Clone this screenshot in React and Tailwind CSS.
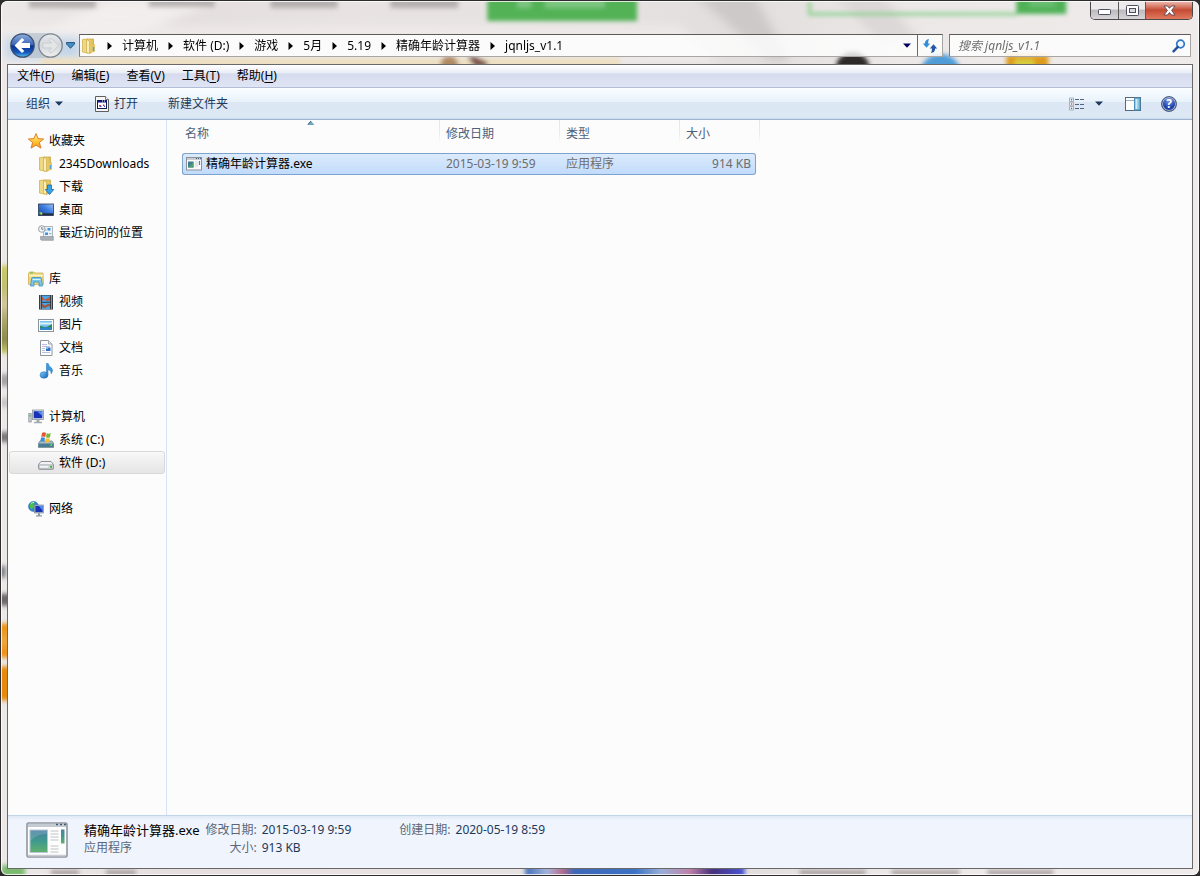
import React from "react";

/* ---------- icons ---------- */

function Svg({ w = 16, h = 16, children, className = "" }) {
  return (
    <svg width={w} height={h} viewBox={`0 0 ${w} ${h}`} className={`shrink-0 ${className}`} aria-hidden="true">
      {children}
    </svg>
  );
}

function FolderIcon() {
  return (
    <Svg>
      <defs>
        <linearGradient id="fold" x1="0" x2="1">
          <stop offset="0" stopColor="#f3dc84" />
          <stop offset="1" stopColor="#dcb94e" />
        </linearGradient>
      </defs>
      <path d="M1.500 1.500l5-.5v14l-5-1z" fill="#f0d784" stroke="#d2b252" strokeWidth=".8" />
      <path d="M6 1h6.500v10.500L10 15H6z" fill="url(#fold)" stroke="#c9a848" strokeWidth=".8" />
      <path d="M5.500 1.500L8.500 3v12.500l-3-1z" fill="#fbefb6" stroke="#c9a444" strokeWidth=".6" />
      <path d="M10 8l4-2v7.500L10 15z" fill="#e6c765" />
      <path d="M12.500 9v4" stroke="#4fa3dc" strokeWidth="1.500" />
    </Svg>
  );
}

function DownloadIcon() {
  return (
    <Svg>
      <path d="M1.500 1.500l5-.5v14l-5-1z" fill="#f0d784" stroke="#d2b252" strokeWidth=".8" />
      <path d="M6 1h6.500v10.500L10 15H6z" fill="#e5c762" stroke="#c9a848" strokeWidth=".8" />
      <path d="M5.500 1.500L8.500 3v12.500l-3-1z" fill="#fbefb6" stroke="#c9a444" strokeWidth=".6" />
      <path d="M9.500 6h4v4.500h2.300L11.500 15.600 7.300 10.500h2.200z" fill="#36a2e8" stroke="#1a66ad" strokeWidth=".8" />
    </Svg>
  );
}

function StarIcon() {
  return (
    <Svg>
      <defs>
        <linearGradient id="star" x1="0" y1="0" x2="0" y2="1">
          <stop offset="0" stopColor="#fff0a0" />
          <stop offset=".5" stopColor="#ffc93a" />
          <stop offset="1" stopColor="#f79a1c" />
        </linearGradient>
      </defs>
      <path d="M8 .6l2.200 5 5.400.4-4.200 3.500 1.500 5.600L8 12.100l-4.900 3 1.500-5.600L.4 6l5.400-.4z" fill="url(#star)" stroke="#d9701c" strokeWidth=".9" strokeLinejoin="round" />
    </Svg>
  );
}

function DesktopIcon() {
  return (
    <Svg>
      <defs>
        <linearGradient id="desk" x1="0" y1="1" x2="1" y2="0">
          <stop offset="0" stopColor="#173f9a" />
          <stop offset=".55" stopColor="#3d7ee0" />
          <stop offset="1" stopColor="#9cc4f4" />
        </linearGradient>
      </defs>
      <rect x=".5" y="2" width="15" height="11.500" fill="url(#desk)" stroke="#2a3a5a" strokeWidth=".8" />
      <rect x="1" y="11.300" width="14" height="2" fill="#24303f" />
      <rect x="1.500" y="10" width="2.500" height="2.500" fill="#5fc66a" />
      <rect x="2.800" y="11" width="1.500" height="1.500" fill="#f0c040" />
    </Svg>
  );
}

function RecentIcon() {
  return (
    <Svg>
      <path d="M5.500 1.500h9v11h-9z" fill="#eef3f8" stroke="#98a3ae" strokeWidth=".8" />
      <path d="M2.500 11.500h12.800v3.800H4q-1.500 0-1.500-1.500z" fill="#a9b0b8" stroke="#838b94" strokeWidth=".6" />
      <rect x="9.500" y="3" width="3" height="2.500" fill="#3d93dd" />
      <rect x="7" y="7.500" width="3" height="2.500" fill="#3d93dd" />
      <path d="M11 8.700h2.500M7 5h1.500" stroke="#7fb0d8" />
      <circle cx="3.800" cy="4" r="3.300" fill="#f2f4f6" stroke="#8f989f" strokeWidth=".9" />
      <path d="M3.800 2v2.200h1.700" fill="none" stroke="#56616b" strokeWidth=".8" />
    </Svg>
  );
}

function LibraryIcon() {
  return (
    <Svg>
      <path d="M.5 2.500l1-1.500h4.500L7 2h8l.5 11.500H.5z" fill="#f0d784" stroke="#cfae54" strokeWidth=".8" />
      <path d="M1 4.500h14" stroke="#fff5c4" strokeWidth="1.400" />
      <path d="M2 2h3" stroke="#62b848" strokeWidth="1" />
      <path d="M3.500 8Q3.500 6.500 5 6.500h7q1.500 0 1.500 1.500l1 7H11v-4H6v4H2.500z" fill="#79c6ea" stroke="#3b93c0" strokeWidth=".8" />
      <path d="M4.500 8.500h8" stroke="#d8f2fc" />
    </Svg>
  );
}

function VideoIcon() {
  return (
    <Svg>
      <rect x="1" y="1" width="14" height="14.500" fill="#2b3038" />
      <rect x="4" y="1.500" width="8" height="6.300" fill="#4aa4e6" />
      <rect x="4" y="8.700" width="8" height="6.300" fill="#4aa4e6" />
      <path d="M4 2.500q2 3.500 4 2.500t4-2.500V6q-2 2-4 .5T4 7z" fill="#b85a3c" />
      <path d="M4 9.500q3 3 4 1.500t4-1v2.500q-2-1-4 1T4 12.500z" fill="#a0543c" />
      <path d="M2.500 1.500v14M13.500 1.500v14" stroke="#eef2f5" strokeWidth="1.300" strokeDasharray="1 1" />
    </Svg>
  );
}

function PictureIcon() {
  return (
    <Svg>
      <rect x=".5" y="2.500" width="15" height="12" fill="#fff" stroke="#8b949c" />
      <rect x="2" y="4" width="12" height="9" fill="#7cc3ec" />
      <path d="M2 6.500h12" stroke="#d9effa" strokeWidth="2" />
      <path d="M2 9q3 .5 5 1t7-3v4H2z" fill="#2f8a4c" />
      <path d="M2 11q6-1.500 12-.5V13H2z" fill="#2b86c8" />
    </Svg>
  );
}

function DocumentIcon() {
  return (
    <Svg>
      <path d="M2.500.5h8l3.500 3.500v11.500H2.500z" fill="#fdfdfd" stroke="#8e959c" />
      <path d="M10.500.5V4H14" fill="#dfe4e9" stroke="#8e959c" strokeWidth=".8" />
      <path d="M4 4.500h5M4 6.500h8M4 8.500h3M4 10.500h3M4 12.500h8" stroke="#b3b9de" strokeWidth=".9" />
      <rect x="8" y="7.500" width="4.500" height="3.500" fill="#2f6fc4" />
      <rect x="8" y="7.500" width="2" height="1.500" fill="#7fc4f0" />
    </Svg>
  );
}

function MusicIcon() {
  return (
    <Svg>
      <defs>
        <linearGradient id="mus" x1="0" y1="0" x2="1" y2="1">
          <stop offset="0" stopColor="#7fcdfa" />
          <stop offset="1" stopColor="#0f62b4" />
        </linearGradient>
      </defs>
      <ellipse cx="6" cy="12" rx="4" ry="3.300" fill="url(#mus)" stroke="#1b6bb4" strokeWidth=".5" />
      <path d="M8.500.5h1.700Q10.500 3 13 4.500 16 7 13.300 10.800 13.600 7.500 10 6.500V12H8.500z" fill="#3b9ae0" stroke="#1b6bb4" strokeWidth=".5" />
    </Svg>
  );
}

function ComputerIcon() {
  return (
    <Svg>
      <rect x=".8" y="4.500" width="2.400" height="8.500" fill="#c9ced3" stroke="#838b92" strokeWidth=".7" />
      <rect x="1.300" y="6" width="1.300" height="1.500" fill="#4cb84c" />
      <rect x="4.500" y="1" width="11" height="9.500" fill="#d8dde2" stroke="#8c949c" strokeWidth=".8" />
      <rect x="5.700" y="2.200" width="8.600" height="7" fill="#1532b8" />
      <path d="M9 2.200h5.300V7z" fill="#5a8cf0" />
      <path d="M8.500 10.800h3v2h2.500v1.500H6v-1.500h2.500z" fill="#a2a9b0" />
    </Svg>
  );
}

function SystemDriveIcon() {
  return (
    <Svg>
      <path d="M2 9h12l1.800 2.500v4H.3v-4z" fill="#a9bcc5" stroke="#667a84" strokeWidth=".7" />
      <rect x=".6" y="11.500" width="15" height="3.500" fill="#4a7f93" />
      <rect x="12.500" y="12" width="1.500" height="2" fill="#59e05a" />
      <path d="M4 1q2-1.300 4 0L7.300 5q-2-1-4 0z" fill="#e8542c" />
      <path d="M8.700 1.300q2 1 4-.2L12 5.200q-2 1.200-4 0z" fill="#76b83a" />
      <path d="M3 5.700q2-1 4 0L6.300 9.500q-2-1-4 0z" fill="#3a8be0" />
      <path d="M7.800 6q2 1.200 4 0L11 9.900q-2 1.200-4 0z" fill="#f6c12c" />
    </Svg>
  );
}

function DriveIcon() {
  return (
    <Svg>
      <path d="M3 6.500h10l2.500 3v4q0 .8-1 .8H1.500q-1 0-1-.8v-4z" fill="#f1f2f3" stroke="#80878d" strokeWidth=".9" />
      <path d="M.8 9.800h14.400v4H.8z" fill="#d4d8dc" stroke="#8e959b" strokeWidth=".6" />
      <path d="M2 11.800h8" stroke="#f7f8f9" strokeWidth="1.500" />
      <rect x="12" y="10.800" width="2" height="2" fill="#4cb93c" />
    </Svg>
  );
}

function NetworkIcon() {
  return (
    <Svg>
      <circle cx="5.500" cy="5.500" r="5" fill="#2c86d8" stroke="#1b5fa4" strokeWidth=".5" />
      <path d="M2 3q2-2.500 5-1.500L5.500 4 6 6 3.500 8.500Q1 6 2 3z" fill="#4cc04a" />
      <path d="M3 2.500q1.500-1.500 3-1" stroke="#cdf3d0" fill="none" />
      <rect x="6.500" y="4" width="9" height="8" fill="#d5dae0" stroke="#7f8890" strokeWidth=".7" />
      <rect x="7.300" y="4.800" width="7.400" height="6.400" fill="#1535b4" />
      <path d="M10.500 4.800h4.200V9.500z" fill="#5a8cf0" />
      <path d="M10 12.200h2v2h2v1.300H8v-1.300h2z" fill="#8f979f" />
    </Svg>
  );
}

function AppIcon() {
  return (
    <Svg h={14}>
      <rect x=".5" y=".5" width="15" height="12.500" fill="#fafafa" stroke="#8d9298" />
      <path d="M1 2h14" stroke="#c9ced4" strokeWidth="2" />
      <path d="M10 1.500h1M12 1.500h1M14 1.500h1" stroke="#4c5d70" />
      <rect x="2" y="4.500" width="5.500" height="6" fill="#3f7f90" />
      <path d="M2 10.500L7.500 5v5.500z" fill="#4fa070" />
      <path d="M9 5h3M9 7h3M9 9h3" stroke="#cfd3d6" />
      <path d="M13.500 4v4" stroke="#4b7fae" strokeWidth="1.200" />
    </Svg>
  );
}

function LargeAppIcon() {
  return (
    <Svg w={42} h={36}>
      <defs>
        <linearGradient id="appbig" x1="0" y1="0" x2="0" y2="1">
          <stop offset="0" stopColor="#4a7fa6" />
          <stop offset=".5" stopColor="#3f9a8c" />
          <stop offset="1" stopColor="#63b06c" />
        </linearGradient>
      </defs>
      <rect x="1" y="1" width="40" height="34" rx="1.500" fill="#fdfdfd" stroke="#8f979f" strokeWidth="1.600" />
      <rect x="2" y="2" width="38" height="3" fill="#c3cad2" />
      <path d="M30 2.500h2M34 2.500h2M38 2.500h2" stroke="#44586e" strokeWidth="1.300" />
      <rect x="4" y="8" width="17.500" height="22.500" fill="url(#appbig)" stroke="#b7c6d4" />
      <path d="M4.500 19Q12 11 21 12V8.500H4.500z" fill="#fff" opacity=".14" />
      <path d="M24.500 9h8M24.500 12h8M24.500 15h8M24.500 18h8M24.500 24h8M24.500 27h8M24.500 30h8" stroke="#d3d6d9" strokeWidth="1.300" />
      <rect x="35" y="7.500" width="3.500" height="14" fill="url(#appbig)" />
      <path d="M2 33.500h38" stroke="#c8ccd0" strokeWidth="1.500" />
    </Svg>
  );
}

function OpenIcon() {
  return (
    <Svg w={14} h={16}>
      <path d="M.5.500h10L13.500 3.500v12H.5z" fill="#f6f6f6" stroke="#5f5f5f" />
      <path d="M10.500.5v3h3" fill="#fff" stroke="#5f5f5f" strokeWidth=".8" />
      <rect x="2.500" y="4.500" width="9" height="8" fill="#fff" stroke="#111b4d" />
      <path d="M2 5.500h10" stroke="#0d1a78" strokeWidth="2" />
      <path d="M7 5h1M9 5h1" stroke="#fff" />
      <path d="M4 9h2v1.500H4z" fill="#e03030" />
      <path d="M5 10h1.500v1H5z" fill="#3050d8" />
      <path d="M8 8.500h1.300V10H8z" fill="#d02020" />
      <path d="M9 9.800h1V11H9z" fill="#2a48c8" />
    </Svg>
  );
}

function Caret({ color = "#1e395b" }) {
  return (
    <Svg w={8} h={5}>
      <path d="M0 .5h8L4 4.800z" fill={color} />
    </Svg>
  );
}

function Crumb() {
  return (
    <Svg w={5} h={8}>
      <path d="M.5 0v8L5 4z" fill="#000" />
    </Svg>
  );
}

/* ---------- what shows through the glass frame ---------- */

function GlassBackdrop() {
  return (
    <svg className="absolute inset-0 h-full w-full" viewBox="0 0 1200 876" preserveAspectRatio="none" aria-hidden="true">
      <defs>
        <filter id="soft" filterUnits="userSpaceOnUse" x="-20" y="-20" width="1240" height="916">
          <feGaussianBlur stdDeviation="2" />
        </filter>
        <filter id="softer" filterUnits="userSpaceOnUse" x="-20" y="-20" width="1240" height="916">
          <feGaussianBlur stdDeviation="5" />
        </filter>
        <linearGradient id="glass" x1="0" x2="1">
          <stop offset="0" stopColor="#ece8e7" />
          <stop offset=".15" stopColor="#e4dfde" />
          <stop offset=".3" stopColor="#e8e3e2" />
          <stop offset=".5" stopColor="#e6e2e1" />
          <stop offset=".62" stopColor="#e2dedd" />
          <stop offset=".75" stopColor="#ece8e7" />
          <stop offset="1" stopColor="#efebea" />
        </linearGradient>
        <linearGradient id="olive" x1="0" y1="0" x2="0" y2="1">
          <stop offset="0" stopColor="#cdcb68" />
          <stop offset=".25" stopColor="#c3c070" />
          <stop offset=".45" stopColor="#d3c6a0" />
          <stop offset=".65" stopColor="#a8a468" />
          <stop offset=".85" stopColor="#8c8d4c" />
          <stop offset="1" stopColor="#c8cb70" />
        </linearGradient>
        <linearGradient id="orange" x1="0" y1="0" x2="0" y2="1">
          <stop offset="0" stopColor="#ee8a0c" />
          <stop offset=".5" stopColor="#f0a840" />
          <stop offset="1" stopColor="#ee8a0c" />
        </linearGradient>
        <linearGradient id="strip" x1="0" x2="1">
          <stop offset="0" stopColor="#3f6cba" />
          <stop offset=".1" stopColor="#a5b6dc" />
          <stop offset=".17" stopColor="#b86a8c" />
          <stop offset=".22" stopColor="#3f68b8" />
          <stop offset=".5" stopColor="#3a72c6" />
          <stop offset=".62" stopColor="#9ab0d8" />
          <stop offset=".75" stopColor="#c080a8" />
          <stop offset=".85" stopColor="#45307c" />
          <stop offset="1" stopColor="#4a58d8" />
        </linearGradient>
      </defs>
      <rect width="1200" height="876" fill="url(#glass)" />
      <g filter="url(#softer)">
        <path d="M110 0H220L100 46H0z" fill="#f6f3f2" opacity=".7" />
        <path d="M690 -10H752L790 60H770z" fill="#c6c2c1" opacity=".75" />
        <path d="M830 -10H880L920 40H880z" fill="#d4cfce" opacity=".6" />
        <path d="M0 24H680L720 64H0z" fill="#f3efee" opacity=".6" />
        <path d="M4 36H80V58H4z" fill="#a4c6e6" opacity=".6" />
      </g>
      <g filter="url(#soft)">
        <path d="M28 -4H95V7H28zM148 -4H214V6H148zM270 -4H337V7H270zM390 -4H458V7H390z" fill="#7d7577" opacity=".45" />
        <rect x="487" y="-10" width="150" height="30" fill="#52b257" />
        <path d="M517 -4h14v11h-14zM545 -4h60v11h-60z" fill="#8fcf92" opacity=".7" />
        <path d="M810 0V13H1018" fill="none" stroke="#8fd092" strokeWidth="4" opacity=".8" />
        <rect x="1017" y="-10" width="50" height="23" fill="#4fb157" />
        <rect x="1030" y="-4" width="26" height="10" fill="#7cc682" opacity=".6" />
        <rect x="40" y="57" width="580" height="10" fill="#ecdfc2" />
        <circle cx="449" cy="64" r="9" fill="#b08a64" />
        <path d="M467 56h8l12 5v5h-12z" fill="#7a5148" />
        <circle cx="853" cy="68" r="17" fill="#2e2a2a" />
        <circle cx="941" cy="74" r="21" fill="#4f9cd8" />
        <path d="M1007 54h42v14h-42z" fill="#dd9a1c" />
        <path d="M1015 58h20v10h-20z" fill="#d8cc40" />
        <rect x="-4" y="265" width="20" height="88" fill="url(#olive)" />
        <rect x="-4" y="374" width="20" height="12" fill="#a9a3a5" />
        <rect x="-4" y="398" width="20" height="9" fill="#cbc5c6" />
        <rect x="-4" y="432" width="20" height="10" fill="#7d7779" />
        <rect x="-4" y="566" width="9" height="12" fill="#85848c" />
        <rect x="-4" y="594" width="20" height="12" fill="#6e6869" />
        <rect x="-4" y="624" width="20" height="34" fill="url(#orange)" />
        <rect x="-4" y="667" width="20" height="34" fill="#e68a10" />
        <path d="M0 866h24v12H0z" fill="#7cba70" />
        <path d="M50 871h28v5H50zM105 871h30v5h-30zM800 871h66v5h-66zM892 871h68v5h-68zM988 871h66v5h-66z" fill="#847c7d" opacity=".7" />
        <rect x="525" y="866" width="220" height="14" fill="url(#strip)" />
      </g>
    </svg>
  );
}

/* ---------- window chrome ---------- */

function WindowControls() {
  return (
    <div className="flex h-[19px] overflow-hidden rounded-b-[5px] border border-t-0 border-[#4b484a]">
      <button aria-label="最小化" className="flex w-7 items-end justify-center border-r border-[#5b585a] bg-linear-to-b from-[#eceaeb] from-45% via-[#bcbabd] via-50% to-[#d8d6d9] pb-[4px]">
        <Svg w={13} h={6}>
          <rect x=".5" y=".5" width="12" height="5" rx=".8" fill="#fff" stroke="#4e5060" />
        </Svg>
      </button>
      <button aria-label="最大化" className="flex w-[27px] items-center justify-center border-r border-[#5b585a] bg-linear-to-b from-[#eceaeb] from-45% via-[#bcbabd] via-50% to-[#d8d6d9]">
        <Svg w={13} h={11}>
          <rect x=".5" y=".5" width="12" height="10" rx=".8" fill="#fff" stroke="#4e5060" />
          <rect x="3.500" y="3.500" width="6" height="4" fill="#d9d8dc" stroke="#4e5060" />
        </Svg>
      </button>
      <button aria-label="关闭" className="flex w-[46px] items-center justify-center bg-linear-to-b from-[#eab5aa] from-5% via-[#c44a32] via-50% to-[#e07a60]">
        <Svg w={13} h={11}>
          <path d="M1 1h3.500L6.500 3.300 8.500 1H12L8.600 5.400 12 10H8.500L6.500 7.500 4.500 10H1L4.400 5.400z" fill="#fff" stroke="#5b4650" strokeWidth=".9" />
        </Svg>
      </button>
    </div>
  );
}

function NavButtons() {
  return (
    <div className="flex items-center">
      <div className="flex items-center gap-[3px] rounded-full bg-[#b2bcc6]/60">
        <button aria-label="后退" className="rounded-full">
          <Svg w={25} h={25}>
            <defs>
              <linearGradient id="bk" x1="0" y1="0" x2="0" y2="1">
                <stop offset="0" stopColor="#8fb0dd" />
                <stop offset=".45" stopColor="#3d69b8" />
                <stop offset=".52" stopColor="#0b3290" />
                <stop offset=".8" stopColor="#1557bc" />
                <stop offset="1" stopColor="#59c8f6" />
              </linearGradient>
            </defs>
            <circle cx="12.500" cy="12.500" r="11.700" fill="url(#bk)" stroke="#3d4d6b" strokeWidth="1.200" />
            <path d="M12 5l2.300 2-3 3.100H20v4.800h-8.700l3 3.100L12 20l-7.500-7.500z" fill="#fff" />
          </Svg>
        </button>
        <button aria-label="前进" className="rounded-full">
          <Svg w={25} h={25}>
            <defs>
              <linearGradient id="fw" x1="0" y1="0" x2="0" y2="1">
                <stop offset="0" stopColor="#e6eaed" />
                <stop offset=".5" stopColor="#d3d7db" />
                <stop offset="1" stopColor="#efefef" />
              </linearGradient>
            </defs>
            <circle cx="12.500" cy="12.500" r="11.700" fill="url(#fw)" stroke="#7f868e" strokeWidth="1.300" />
            <path d="M13 5l-2.300 2 3 3.100H5v4.800h8.700l-3 3.100L13 20l7.500-7.500z" fill="#e3e5e7" stroke="#c3c7cb" strokeWidth=".7" />
          </Svg>
        </button>
      </div>
      <button aria-label="最近的页面" className="ml-[3px]">
        <Svg w={9} h={7}>
          <path d="M.5.500h8v1.500L4.500 6.300.5 2z" fill="#3f8fc4" stroke="#1d3f6e" strokeWidth=".8" />
        </Svg>
      </button>
    </div>
  );
}

const crumbs = ["计算机", "软件 (D:)", "游戏", "5月", "5.19", "精确年龄计算器", "jqnljs_v1.1"];

function AddressBar() {
  return (
    <div className="flex h-[23px] flex-1 border border-[#a9a5a3] border-t-[#5d5b59] border-l-[#7d7a78] bg-white/80">
      <nav aria-label="地址" className="flex min-w-0 flex-1 items-center gap-2.5 pl-px">
        <FolderIcon />
        {crumbs.map((c) => (
          <React.Fragment key={c}>
            <Crumb />
            <button className="whitespace-nowrap text-black">{c}</button>
          </React.Fragment>
        ))}
      </nav>
      <button aria-label="以前的位置" className="flex w-5 items-center justify-center">
        <Caret color="#00005a" />
      </button>
      <button aria-label="刷新" className="flex w-[25px] items-center justify-center border-l border-[#6d6a68]">
        <Svg>
          <path d="M7 1Q3 1.500 2.800 5.500H.8l3.700 4.200 3.700-4.200H6q0-2 1-4.500z" fill="#2f8fd8" />
          <path d="M9 15q4-.5 4.200-4.500h2L11.500 6.300 7.800 10.500H10q0 2-1 4.500z" fill="#2458a6" />
        </Svg>
      </button>
    </div>
  );
}

function SearchBox() {
  return (
    <form role="search" onSubmit={(e) => e.preventDefault()} className="flex h-[23px] w-[242px] items-center border border-[#a9a5a3] border-t-[#5d5b59] border-l-[#7d7a78] bg-white/80 pr-1 pl-2">
      <input aria-label="搜索" placeholder="搜索 jqnljs_v1.1" className="min-w-0 flex-1 bg-transparent italic outline-none placeholder:text-[#6f6f6f]" />
      <button aria-label="开始搜索">
        <Svg w={14} h={14}>
          <circle cx="8.500" cy="5" r="3.800" fill="#eef8ff" stroke="#2f78c8" strokeWidth="1.700" />
          <path d="M5.800 7.800L1.500 12.300" stroke="#23509c" strokeWidth="2.400" strokeLinecap="round" />
        </Svg>
      </button>
    </form>
  );
}

/* ---------- bars ---------- */

const menus = [
  ["文件", "F"],
  ["编辑", "E"],
  ["查看", "V"],
  ["工具", "T"],
  ["帮助", "H"],
];

function MenuBar() {
  return (
    <div role="menubar" className="flex h-[23px] shrink-0 items-center gap-[17px] border-b border-[#b3bdd5] bg-[linear-gradient(#ffffff,#e8ecf6_38%,#d5dbee_39%,#e0e5f5)] pl-[9px] text-black">
      {menus.map(([label, key]) => (
        <button role="menuitem" key={key} className="whitespace-nowrap">
          {label}(<u className="underline-offset-2">{key}</u>)
        </button>
      ))}
    </div>
  );
}

function Toolbar() {
  return (
    <div className="flex h-8 shrink-0 items-center border-b border-[#a0b4cf] bg-[linear-gradient(#fbfeff,#e8f2fb_45%,#dce6f4_46%,#dde8f5_94%,#c8daec)] pr-[15px] pl-[18px] text-[#1e395b]">
      <button className="flex items-center gap-[5px]">
        组织 <Caret />
      </button>
      <button className="ml-8 flex items-center gap-[5px]">
        <OpenIcon />
        打开
      </button>
      <button className="ml-[30px]">新建文件夹</button>
      <div className="ml-auto flex items-center">
        <button aria-label="更改您的视图">
          <Svg w={16} h={14}>
            <path d="M.5 1h4v3.500h-4zM.5 5.200h4v3.500h-4zM.5 9.500h4V13h-4z" fill="#fff" stroke="#8ea0b4" strokeWidth=".8" />
            <path d="M1.800 2.800h1.500" stroke="#2f6fb4" strokeWidth="1.300" />
            <path d="M1.800 7h1.500" stroke="#d83a2a" strokeWidth="1.300" />
            <path d="M1.800 11.300h1.500" stroke="#3a7a58" strokeWidth="1.300" />
            <path d="M6 2.500h4M11 2.500h4M6 7.500h4M11 7.500h4M6 11.500h4M11 11.500h4" stroke="#50667e" />
          </Svg>
        </button>
        <button aria-label="更多选项" className="ml-2.5">
          <Caret />
        </button>
        <button aria-label="显示预览窗格" className="ml-[22px]">
          <Svg w={16} h={14}>
            <rect x=".5" y=".5" width="15" height="13" fill="#fdfefe" stroke="#54697f" />
            <path d="M1 3.500h8.500" stroke="#9fb0c0" />
            <rect x="9.500" y="1" width="5.500" height="12" fill="#86cbe6" stroke="#4b8db2" />
            <path d="M11.500 2v10" stroke="#cdeefa" strokeWidth="1.500" />
          </Svg>
        </button>
        <button aria-label="获取帮助" className="ml-5">
          <span className="flex size-4 items-center justify-center rounded-full border border-[#4d5f86] bg-[radial-gradient(circle_at_50%_25%,#7f9be0,#1f45b0_55%,#17328c)] text-xs leading-none font-bold text-white ring-1 ring-[#aab4c4] ring-inset">?</span>
        </button>
      </div>
    </div>
  );
}

/* ---------- navigation pane ---------- */

const groups = [
  { label: "收藏夹", Icon: StarIcon, items: [["2345Downloads", FolderIcon], ["下载", DownloadIcon], ["桌面", DesktopIcon], ["最近访问的位置", RecentIcon]] },
  { label: "库", Icon: LibraryIcon, items: [["视频", VideoIcon], ["图片", PictureIcon], ["文档", DocumentIcon], ["音乐", MusicIcon]] },
  { label: "计算机", Icon: ComputerIcon, items: [["系统 (C:)", SystemDriveIcon], ["软件 (D:)", DriveIcon]] },
  { label: "网络", Icon: NetworkIcon, items: [] },
];

function NavPane() {
  return (
    <nav aria-label="导航窗格" className="flex w-[159px] shrink-0 flex-col gap-[23px] border-r border-[#d6e5f5] px-px pt-[9px] text-black">
      {groups.map(({ label, Icon, items }) => (
        <section key={label} className="flex flex-col">
          <button className="flex h-[23px] items-center gap-[5px] pl-[19px]">
            <Icon />
            {label}
          </button>
          {items.map(([name, ItemIcon]) => (
            <button
              key={name}
              className={
                name === "软件 (D:)"
                  ? "flex h-[23px] items-center gap-[5px] rounded-[3px] border border-[#d9d9d9] bg-linear-to-b from-[#f8f8f8] to-[#e5e5e5] pl-7 whitespace-nowrap"
                  : "flex h-[23px] items-center gap-[5px] pl-[29px] whitespace-nowrap"
              }
            >
              <ItemIcon />
              {name}
            </button>
          ))}
        </section>
      ))}
    </nav>
  );
}

/* ---------- file list ---------- */

const thClass = "h-[23px] bg-[linear-gradient(#dbe7f3,#e6eef7_60%,#fcfcfc)] bg-[length:1px_100%] bg-right bg-no-repeat pt-1 text-left font-normal";
const tdClass = "h-[22px] border-y border-[#7da2ce] bg-linear-to-b from-[#dcebfc] to-[#c1dbfc] p-0";

function FileList() {
  return (
    <main className="min-w-0 flex-1 overflow-auto pl-[15px]">
      <table className="w-[578px] table-fixed border-separate border-spacing-0">
        <colgroup>
          <col className="w-[258px]" />
          <col className="w-[120px]" />
          <col className="w-[120px]" />
          <col className="w-[76px]" />
          <col className="w-1" />
        </colgroup>
        <thead className="text-[#4c607a]">
          <tr>
            <th className={`relative pl-[3px] ${thClass}`}>
              名称
              <svg width="7" height="4" viewBox="0 0 7 4" className="absolute top-px left-1/2 -translate-x-1/2" aria-hidden="true">
                <path d="M0 4L3.500 0 7 4z" fill="#6fa7c6" />
                <path d="M0 4L3.500 0" stroke="#3c5e72" />
              </svg>
            </th>
            <th className={`pl-1.5 ${thClass}`}>修改日期</th>
            <th className={`pl-1.5 ${thClass}`}>类型</th>
            <th className="h-[23px] pt-1 pl-1.5 text-left font-normal">大小</th>
            <th aria-hidden="true" className={thClass} />
          </tr>
          <tr aria-hidden="true">
            <th colSpan={5} className="h-2.5 p-0" />
          </tr>
        </thead>
        <tbody className="text-[#6d6d6d]">
          <tr>
            <td className={`rounded-l-[3px] border-l ${tdClass}`}>
              <span className="flex items-center gap-1 pl-[3px] text-black">
                <AppIcon />
                精确年龄计算器.exe
              </span>
            </td>
            <td className={`${tdClass}`}>
              <span className="pl-1.5">2015-03-19 9:59</span>
            </td>
            <td className={`${tdClass}`}>
              <span className="pl-1.5">应用程序</span>
            </td>
            <td className={`rounded-r-[3px] border-r text-right ${tdClass}`}>
              <span className="pr-1">914 KB</span>
            </td>
            <td className="p-0" />
          </tr>
        </tbody>
      </table>
    </main>
  );
}

/* ---------- details pane ---------- */

function DetailsPane() {
  return (
    <footer className="flex h-[53px] shrink-0 items-start border-t border-[#c3d5e9] bg-[linear-gradient(#dfe9f6,#f0f4fc_8%)] pt-[5px] pl-[18px] leading-[18px] text-[#5a6779]">
      <div className="pt-px">
        <LargeAppIcon />
      </div>
      <div className="ml-4">
        <p className="text-[13px] whitespace-nowrap text-black">精确年龄计算器.exe</p>
        <p>应用程序</p>
      </div>
      <dl className="ml-1.5 grid grid-cols-[auto_auto] gap-x-[5px]">
        <dt className="text-right">修改日期:</dt>
        <dd className="text-[#1e395b]">2015-03-19 9:59</dd>
        <dt className="text-right">大小:</dt>
        <dd className="text-[#1e395b]">913 KB</dd>
      </dl>
      <dl className="ml-12 flex gap-[5px]">
        <dt>创建日期:</dt>
        <dd className="text-[#1e395b]">2020-05-19 8:59</dd>
      </dl>
    </footer>
  );
}

export default function App() {
  return (
    <div className="h-screen bg-[#2e2b2c] font-['Noto_Sans','Noto_Sans_CJK_SC',sans-serif] text-xs">
      <div className="relative isolate flex h-full flex-col overflow-hidden rounded-[7px] border border-[#2e2b2c]">
        <div className="absolute inset-0 -z-10">
          <GlassBackdrop />
        </div>
        <div className="pointer-events-none absolute inset-0 rounded-[6px] border border-white/80" />
        <header className="flex shrink-0 flex-col">
          <div className="flex justify-end pr-1.5">
            <WindowControls />
          </div>
          <div className="mt-[13px] flex items-center pr-2 pb-1.5 pl-[9px]">
            <NavButtons />
            <div className="ml-1 flex flex-1 gap-1.5">
              <AddressBar />
              <SearchBox />
            </div>
          </div>
        </header>
        <div className="mx-1.5 mb-1.5 flex min-h-0 flex-1 flex-col border border-[#6a6768] bg-[#fcfcfc]">
          <MenuBar />
          <Toolbar />
          <div className="flex min-h-0 flex-1">
            <NavPane />
            <FileList />
          </div>
          <DetailsPane />
        </div>
      </div>
    </div>
  );
}
